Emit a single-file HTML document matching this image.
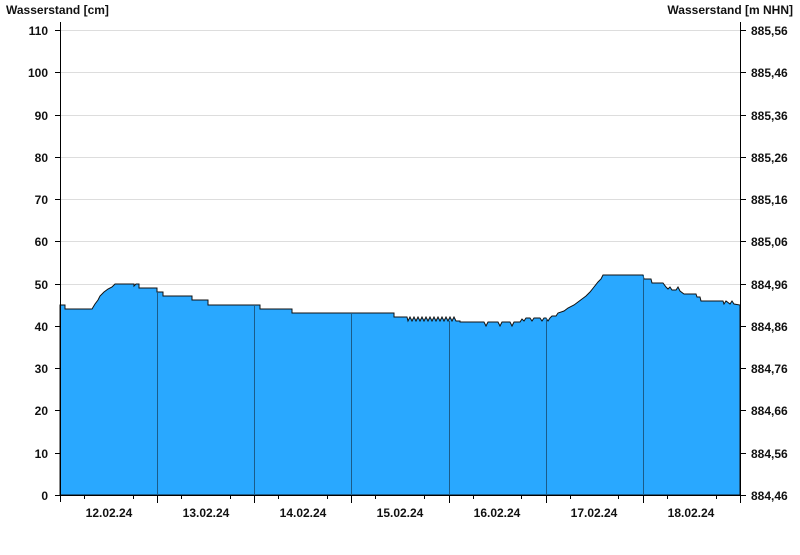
<!DOCTYPE html>
<html><head><style>
body{margin:0;background:#fff;width:800px;height:550px;overflow:hidden}
text{font-family:"Liberation Sans",Arial,sans-serif;font-weight:bold;font-size:12px;fill:#111}
</style></head><body>
<svg width="800" height="550" viewBox="0 0 800 550">
<g stroke="#ddd" stroke-width="1">
<line x1="60" x2="740" y1="30.5" y2="30.5"/><line x1="60" x2="740" y1="72.5" y2="72.5"/>
<line x1="60" x2="740" y1="115.5" y2="115.5"/><line x1="60" x2="740" y1="157.5" y2="157.5"/>
<line x1="60" x2="740" y1="199.5" y2="199.5"/><line x1="60" x2="740" y1="241.5" y2="241.5"/>
<line x1="60" x2="740" y1="284.5" y2="284.5"/><line x1="60" x2="740" y1="326.5" y2="326.5"/>
</g>
<path fill="#29a8ff" stroke="#111" stroke-width="1" d="M60,495 L60,305 L65,305 L65,309 L92,309 L95,304 L98,300 L100,296 L104,292 L108,289 L112,287 L115,284 L134,284 L134,286 L136,284 L139,284 L139,288 L157,288 L157,292 L163,292 L163,296 L192,296 L192,300 L208,300 L208,305 L260,305 L260,309 L292,309 L292,313 L394,313 L394,317 L407,317 L408,321 L410,317 L412,321 L414,317 L416,321 L418,317 L420,321 L422,317 L424,321 L426,317 L428,321 L430,317 L432,321 L434,317 L436,321 L438,317 L440,321 L442,317 L444,321 L446,317 L448,321 L450,317 L452,321 L454,317 L456,321 L460,321 L460,322 L484,322 L486,326 L488,322 L498,322 L500,326 L502,322 L510,322 L512,326 L514,322 L520,322 L522,319 L524,321 L526,318 L530,318 L532,321 L534,318 L540,318 L542,321 L544,318 L546,318 L548,321 L550,318 L552,316 L556,316 L558,313 L564,311 L568,308 L574,305 L578,302 L582,299 L586,296 L590,292 L594,287 L598,282 L601,279 L603,275 L643,275 L644,279 L651,279 L652,283 L663,283 L666,287 L668,289 L670,287 L672,290 L676,290 L678,287 L680,291 L684,294 L696,294 L697,297 L700,297 L701,301 L723,301 L724,304 L726,301 L730,304 L732,301 L734,304 L740,305 L740,495 Z"/>
<g stroke="#1a5c8a" stroke-width="1">
<line x1="157.5" x2="157.5" y1="292" y2="495"/><line x1="254.5" x2="254.5" y1="305" y2="495"/>
<line x1="351.5" x2="351.5" y1="313" y2="495"/><line x1="449.5" x2="449.5" y1="321" y2="495"/>
<line x1="546.5" x2="546.5" y1="318" y2="495"/><line x1="643.5" x2="643.5" y1="275" y2="495"/>
</g>
<g stroke="#000" stroke-width="1">
<line x1="60.5" x2="60.5" y1="22" y2="502"/>
<line x1="740.5" x2="740.5" y1="22" y2="495"/>
<line x1="55" x2="740" y1="495.5" y2="495.5"/>
</g>
<g stroke="#000" stroke-width="1" id="lt">
<line x1="55" x2="60" y1="30.5" y2="30.5"/><line x1="55" x2="60" y1="72.5" y2="72.5"/><line x1="55" x2="60" y1="115.5" y2="115.5"/><line x1="55" x2="60" y1="157.5" y2="157.5"/><line x1="55" x2="60" y1="199.5" y2="199.5"/><line x1="55" x2="60" y1="241.5" y2="241.5"/><line x1="55" x2="60" y1="284.5" y2="284.5"/><line x1="55" x2="60" y1="326.5" y2="326.5"/><line x1="55" x2="60" y1="368.5" y2="368.5"/><line x1="55" x2="60" y1="410.5" y2="410.5"/><line x1="55" x2="60" y1="453.5" y2="453.5"/>
<line x1="740" x2="746" y1="30.5" y2="30.5"/><line x1="740" x2="746" y1="72.5" y2="72.5"/><line x1="740" x2="746" y1="115.5" y2="115.5"/><line x1="740" x2="746" y1="157.5" y2="157.5"/><line x1="740" x2="746" y1="199.5" y2="199.5"/><line x1="740" x2="746" y1="241.5" y2="241.5"/><line x1="740" x2="746" y1="284.5" y2="284.5"/><line x1="740" x2="746" y1="326.5" y2="326.5"/><line x1="740" x2="746" y1="368.5" y2="368.5"/><line x1="740" x2="746" y1="410.5" y2="410.5"/><line x1="740" x2="746" y1="453.5" y2="453.5"/><line x1="740" x2="746" y1="495.5" y2="495.5"/>
<line x1="157.5" x2="157.5" y1="495" y2="503"/><line x1="254.5" x2="254.5" y1="495" y2="503"/><line x1="351.5" x2="351.5" y1="495" y2="503"/><line x1="449.5" x2="449.5" y1="495" y2="503"/><line x1="546.5" x2="546.5" y1="495" y2="503"/><line x1="643.5" x2="643.5" y1="495" y2="503"/><line x1="740.5" x2="740.5" y1="495" y2="503"/>
<line x1="84.5" x2="84.5" y1="495" y2="499"/><line x1="133.5" x2="133.5" y1="495" y2="499"/><line x1="181.5" x2="181.5" y1="495" y2="499"/><line x1="230.5" x2="230.5" y1="495" y2="499"/><line x1="278.5" x2="278.5" y1="495" y2="499"/><line x1="327.5" x2="327.5" y1="495" y2="499"/><line x1="375.5" x2="375.5" y1="495" y2="499"/><line x1="424.5" x2="424.5" y1="495" y2="499"/><line x1="473.5" x2="473.5" y1="495" y2="499"/><line x1="521.5" x2="521.5" y1="495" y2="499"/><line x1="570.5" x2="570.5" y1="495" y2="499"/><line x1="618.5" x2="618.5" y1="495" y2="499"/><line x1="667.5" x2="667.5" y1="495" y2="499"/><line x1="716.5" x2="716.5" y1="495" y2="499"/>
</g>
<text x="6" y="14">Wasserstand [cm]</text>
<text x="793" y="14" text-anchor="end">Wasserstand [m NHN]</text>
<g text-anchor="end">
<text x="48" y="35">110</text><text x="48" y="77">100</text><text x="48" y="120">90</text><text x="48" y="162">80</text><text x="48" y="204">70</text><text x="48" y="246">60</text><text x="48" y="289">50</text><text x="48" y="331">40</text><text x="48" y="373">30</text><text x="48" y="415">20</text><text x="48" y="458">10</text><text x="48" y="500">0</text>
</g>
<g>
<text x="751" y="35">885,56</text><text x="751" y="77">885,46</text><text x="751" y="120">885,36</text><text x="751" y="162">885,26</text><text x="751" y="204">885,16</text><text x="751" y="246">885,06</text><text x="751" y="289">884,96</text><text x="751" y="331">884,86</text><text x="751" y="373">884,76</text><text x="751" y="415">884,66</text><text x="751" y="458">884,56</text><text x="751" y="500">884,46</text>
</g>
<g text-anchor="middle">
<text x="109" y="517">12.02.24</text><text x="206" y="517">13.02.24</text><text x="303" y="517">14.02.24</text><text x="400" y="517">15.02.24</text><text x="497" y="517">16.02.24</text><text x="594" y="517">17.02.24</text><text x="691" y="517">18.02.24</text>
</g>
</svg>
</body></html>
